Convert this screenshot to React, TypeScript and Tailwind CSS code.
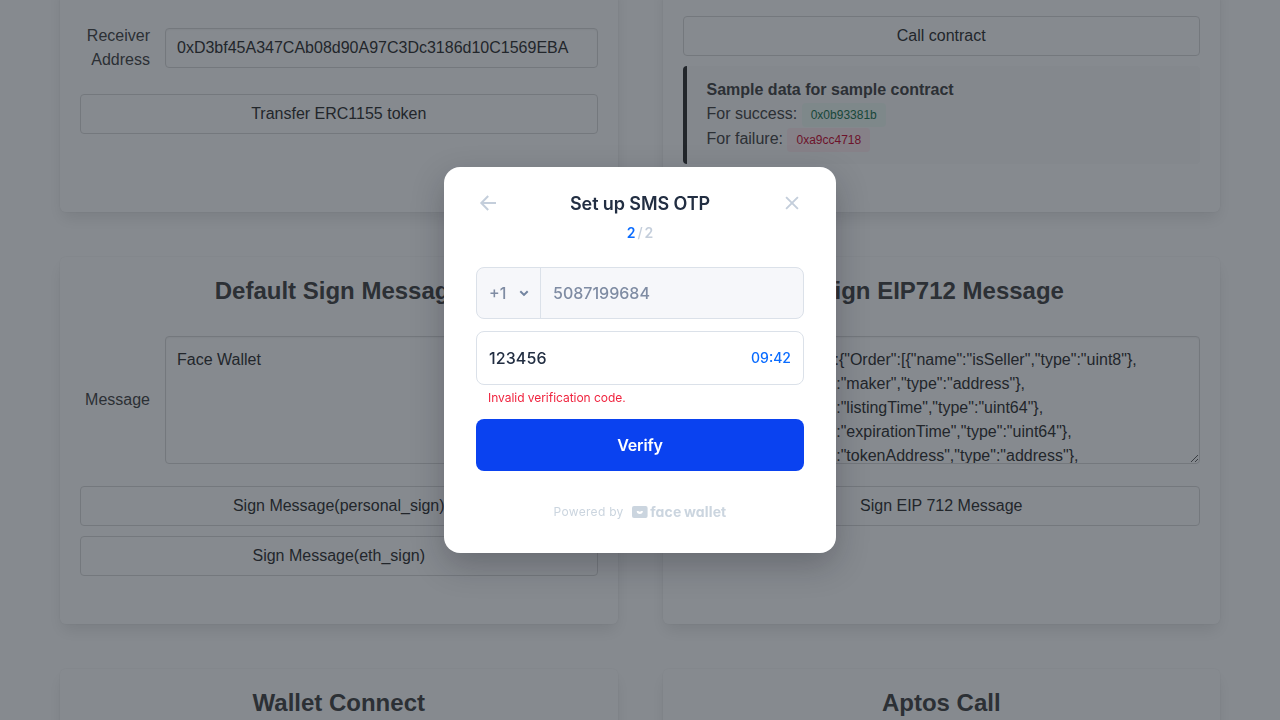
import React from 'react';

const typedData = `{"types":{"Order":[{"name":"isSeller","type":"uint8"},
{"name":"maker","type":"address"},
{"name":"listingTime","type":"uint64"},
{"name":"expirationTime","type":"uint64"},
{"name":"tokenAddress","type":"address"},
{"name":"tokenId","type":"uint256"}]}}`;

function Box({ className = '', children }: { className?: string; children?: React.ReactNode }) {
  return (
    <section
      className={`rounded-md bg-white p-5 shadow-[0_8px_16px_-2px_rgba(10,10,10,0.1),0_0_0_1px_rgba(10,10,10,0.02)] ${className}`}
    >
      {children}
    </section>
  );
}

function Title({ children }: { children: React.ReactNode }) {
  return <h2 className="text-center text-2xl leading-[27px] font-bold text-[#4a4a4a]">{children}</h2>;
}

function Button({ children }: { children: React.ReactNode }) {
  return (
    <button className="block h-10 w-full rounded border border-[#dbdbdb] bg-white text-center text-[#363636]">
      {children}
    </button>
  );
}

function Label({ children }: { children: React.ReactNode }) {
  return <label className="w-[70px] shrink-0 text-right text-[#4a4a4a]">{children}</label>;
}

function Message({ label, value }: { label: string; value: string }) {
  return (
    <div className="mt-8 mb-[22px] flex items-center gap-[15px]">
      <Label>{label}</Label>
      <textarea
        readOnly
        defaultValue={value}
        wrap="off"
        className="block h-32 min-w-0 flex-1 resize overflow-hidden rounded border border-[#dbdbdb] bg-white px-[11px] py-[11px] leading-6 text-[#363636] shadow-[inset_0_1px_2px_rgba(10,10,10,0.05)]"
      />
    </div>
  );
}

function FaceLogo() {
  return (
    <div className="flex items-center gap-[2.5px]">
      <svg width="16" height="12" viewBox="0 0 16 12">
        <rect width="15.6" height="12" rx="2" fill="#cbd5df" />
        <path d="M4.7 5.1h1.2c.5 0 .8.7 1.9.7s1.4-.7 1.9-.7h1.2c0 1.7-1.3 3-3.1 3s-3.1-1.3-3.1-3z" fill="#fff" />
      </svg>
      <span className="text-[14px] leading-4 font-bold tracking-[0.15px] text-[#cbd5df] [word-spacing:-1px] [font-feature-settings:'cv11']">
        face wallet
      </span>
    </div>
  );
}

function OtpModal() {
  return (
    <div className="flex h-[386px] w-[392px] flex-col rounded-2xl bg-white px-8 pt-5 font-['Inter',sans-serif] shadow-[0_12px_32px_rgba(20,20,32,0.26)]">
      <header className="flex h-8 items-center justify-between">
        <svg width="24" height="24" viewBox="0 0 24 24" fill="none" stroke="#c4cedb" strokeWidth="2">
          <path d="M20 12H5.2M12.2 5 5.3 12l6.9 7" />
        </svg>
        <h1 className="pt-px text-lg leading-7 font-semibold tracking-[-0.1px] text-[#222e42]">Set up SMS OTP</h1>
        <svg width="24" height="24" viewBox="0 0 24 24" fill="none" stroke="#c4cedb" strokeWidth="1.9">
          <path d="m6.1 6.1 11.8 11.8M17.9 6.1 6.1 17.9" />
        </svg>
      </header>
      <p className="mt-1 flex justify-center gap-[2px] text-sm leading-5 font-medium text-[#c4cedb]">
        <span className="font-semibold text-[#0a6cff]">2</span>
        <span>/</span>
        <span className="font-semibold">2</span>
      </p>
      <div className="mt-6 flex h-[52px] overflow-hidden rounded-lg border border-[#dbe1e9] bg-[#f6f7fa] text-base font-medium text-[#7f8ca3]">
        <div className="flex w-16 items-center border-r border-[#dbe1e9] pl-3">
          <span className="w-[29px]">+1</span>
          <svg width="12" height="12" viewBox="0 0 12 12" fill="none" stroke="#7385a0" strokeWidth="2">
            <path d="m2.3 4.2 3.7 3.7 3.7-3.7" />
          </svg>
        </div>
        <div className="flex items-center pl-3">5087199684</div>
      </div>
      <div className="mt-3 flex h-[54px] items-center justify-between rounded-lg border border-[#dbe1e9] px-3 text-base text-[#222e42]">
        <span className="font-medium tracking-[0.1px]">123456</span>
        <span className="text-sm font-medium text-[#0a6cff]">09:42</span>
      </div>
      <p className="mt-1 pl-3 text-xs leading-[18px] tracking-[-0.04px] text-[#f0243f]">Invalid verification code.</p>
      <button className="mt-3 h-[52px] shrink-0 rounded-lg bg-[#0a42f0] text-base font-semibold tracking-[-0.2px] text-white">
        Verify
      </button>
      <footer className="mt-[33px] flex items-center justify-center gap-2">
        <span className="text-xs leading-4 tracking-[0.3px] text-[#cbd5df]">Powered by</span>
        <FaceLogo />
      </footer>
    </div>
  );
}

export default function App() {
  return (
    <div className="h-[720px] overflow-hidden bg-white font-['Liberation_Sans',sans-serif] text-base leading-6">
      <main className="-mt-5 grid grid-cols-2 gap-[45px] px-[60px]">
        <Box className="h-[232px] pt-11">
          <div className="mb-[22px] flex items-center gap-[15px]">
            <Label>Receiver Address</Label>
            <input
              readOnly
              defaultValue="0xD3bf45A347CAb08d90A97C3Dc3186d10C1569EBA"
              className="h-10 min-w-0 flex-1 rounded border border-[#dbdbdb] px-[11px] text-[#363636] shadow-[inset_0_1px_2px_rgba(10,10,10,0.05)]"
            />
          </div>
          <Button>Transfer ERC1155 token</Button>
        </Box>
        <Box className="h-[232px] pt-9">
          <Button>Call contract</Button>
          <div className="mt-2.5 h-[98px] rounded border-l-4 border-[#363636] bg-[#fafafa] py-3 pl-5 text-[#4a4a4a]">
            <p className="font-bold">Sample data for sample contract</p>
            <div className="flex h-[25px] gap-[4.5px]">
              For success:
              <span className="mt-px flex h-6 items-center rounded bg-[#effaf5] px-[9px] text-xs text-[#257953]">
                0x0b93381b
              </span>
            </div>
            <div className="flex h-[25px] gap-[4.5px]">
              For failure:
              <span className="mt-px flex h-6 items-center rounded bg-[#feecf0] px-[9px] text-xs text-[#cc0f35]">
                0xa9cc4718
              </span>
            </div>
          </div>
        </Box>
        <Box className="h-[367px]">
          <Title>Default Sign Message</Title>
          <Message label="Message" value="Face Wallet" />
          <div className="flex flex-col gap-2.5">
            <Button>Sign Message(personal_sign)</Button>
            <Button>Sign Message(eth_sign)</Button>
          </div>
        </Box>
        <Box className="h-[367px]">
          <Title>Sign EIP712 Message</Title>
          <Message label="Message" value={typedData} />
          <Button>Sign EIP 712 Message</Button>
        </Box>
        <Box className="h-40">
          <Title>Wallet Connect</Title>
        </Box>
        <Box className="h-40">
          <Title>Aptos Call</Title>
        </Box>
      </main>
      <div className="fixed inset-0 flex items-center justify-center bg-[rgba(13,21,32,0.5)]">
        <OtpModal />
      </div>
    </div>
  );
}
